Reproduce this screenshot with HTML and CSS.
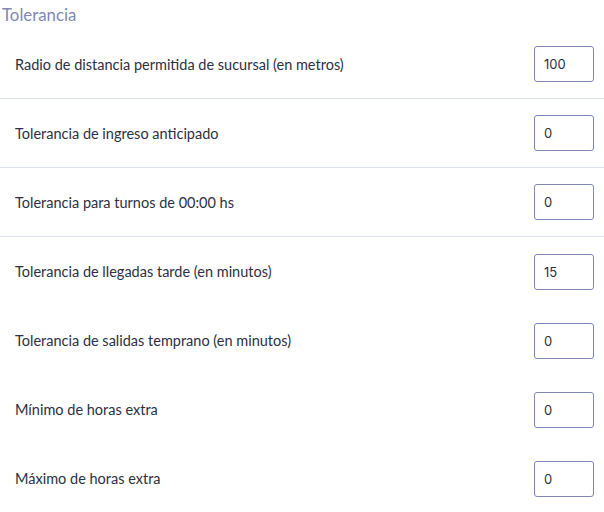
FILE: index.html
```html
<!DOCTYPE html>
<html lang="es">
<head>
<meta charset="utf-8">
<link rel="stylesheet" href="styles.css">
</head>
<body>
<section class="panel">
  <h2 class="title">Tolerancia</h2>
  <div class="rows">
    <div class="row sep"><span class="label">Radio de distancia permitida de sucursal (en metros)</span><input class="field" value="100"></div>
    <div class="row sep"><span class="label">Tolerancia de ingreso anticipado</span><input class="field" value="0"></div>
    <div class="row sep"><span class="label">Tolerancia para turnos de 00:00 hs</span><input class="field" value="0"></div>
    <div class="row"><span class="label">Tolerancia de llegadas tarde (en minutos)</span><input class="field" value="15"></div>
    <div class="row"><span class="label">Tolerancia de salidas temprano (en minutos)</span><input class="field" value="0"></div>
    <div class="row"><span class="label">Mínimo de horas extra</span><input class="field" value="0"></div>
    <div class="row"><span class="label">Máximo de horas extra</span><input class="field" value="0"></div>
  </div>
</section>
</body>
</html>
```
FILE: styles.css
```css
html, body {
  margin: 0;
  padding: 0;
  background: #ffffff;
}
.panel {
  width: 604px;
  font-family: Lato, "Noto Sans", sans-serif;
}
.title {
  margin: 0;
  padding: 4px 0 0 2px;
  height: 30px;
  box-sizing: border-box;
  font-size: 16.8px;
  font-weight: 400;
  color: #7f87b5;
  line-height: 22px;
}
.rows {
  display: flex;
  flex-direction: column;
}
.row {
  display: flex;
  align-items: center;
  justify-content: space-between;
  height: 69px;
  box-sizing: border-box;
  padding: 0 10px 0 15px;
}
.row.sep {
  border-bottom: 1px solid #dde3ee;
}
.label {
  font-size: 14.5px;
  color: #2c3040;
}
.field {
  width: 60px;
  height: 36px;
  box-sizing: border-box;
  border: 1px solid #7f87b2;
  border-radius: 3px;
  padding: 0 9px;
  font-family: Inter, sans-serif;
  font-size: 13px;
  color: #2c3040;
  outline: none;
  background: #fff;
}
```
